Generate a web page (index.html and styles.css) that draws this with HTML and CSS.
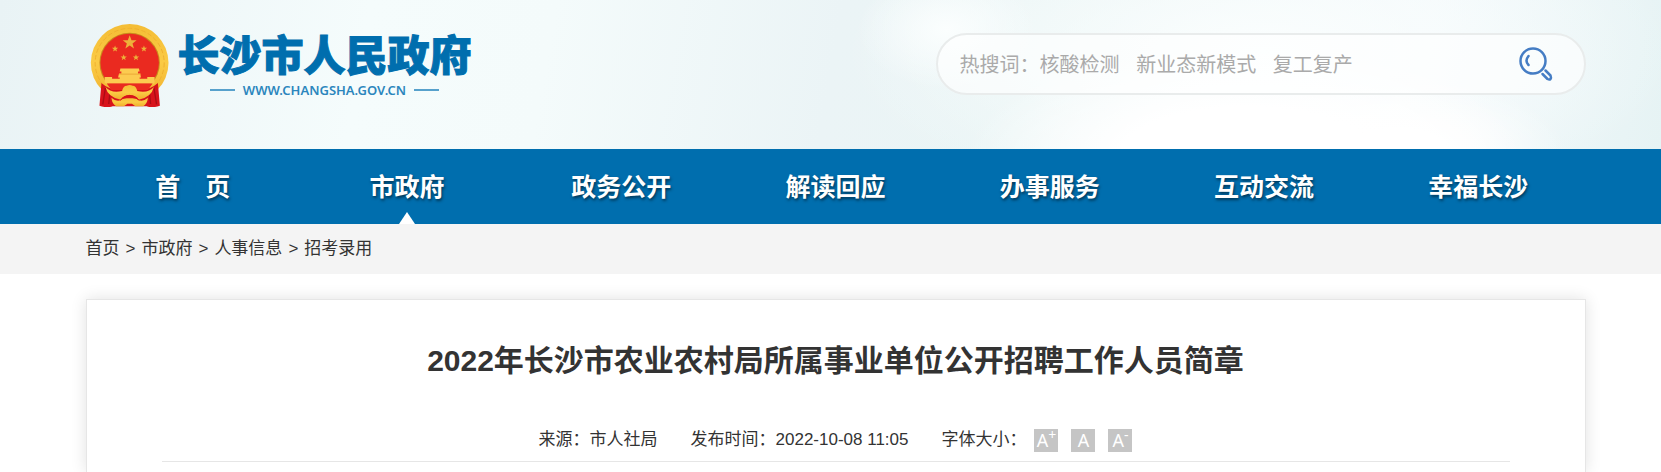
FILE: index.html
```html
<!DOCTYPE html>
<html lang="zh-CN">
<head>
  <meta charset="UTF-8">
  <meta name="viewport" content="width=device-width, initial-scale=1.0">
  <title>2022年长沙市农业农村局所属事业单位公开招聘工作人员简章</title>
  <link rel="stylesheet" href="styles.css">
</head>
<body>

  <!-- Header -->
  <header class="header">
    <div class="container header-inner">
      <a class="logo" href="#">
        <svg class="emblem" viewBox="0 0 240 250" aria-hidden="true">
          <defs>
            <linearGradient id="gold" x1="0" y1="0" x2="0" y2="1">
              <stop offset="0" stop-color="#f4bd35"/>
              <stop offset="0.5" stop-color="#fbcb45"/>
              <stop offset="1" stop-color="#efae2b"/>
            </linearGradient>
            <polygon id="star" points="0,-10 2.5,-3.2 9.5,-3.1 3.9,1.2 5.9,8.1 0,4 -5.9,8.1 -3.9,1.2 -9.5,-3.1 -2.5,-3.2"/>
          </defs>
          <circle cx="119" cy="117" r="117" fill="url(#gold)"/>
          <circle cx="119" cy="117" r="104" fill="none" stroke="#efb02f" stroke-width="3" stroke-dasharray="14 7"/>
          <circle cx="119" cy="117" r="91" fill="#c98a1c"/>
          <circle cx="119" cy="117" r="88" fill="#ea2a20"/>
          <g fill="#edb23a">
            <use href="#star" transform="translate(119 56) scale(2.2)"/>
            <use href="#star" transform="translate(75 75)"/>
            <use href="#star" transform="translate(162 75)"/>
            <use href="#star" transform="translate(101 101)"/>
            <use href="#star" transform="translate(138 101)"/>
          </g>
          <path fill="#fccb50" d="M91 134h56l2 9h-5v6h7l2 12h-4v4h38l7 15H46l7-15h36v-4h-5l3-12h7v-6h-5z"/>
          <path fill="#fccb50" d="M44 160h22v6h106v-6h22v18H44z"/>
          <path d="M87 151h65" stroke="#e5962a" stroke-width="2"/>
          <path fill="#d8131b" d="M34 178q22 20 50 20h70q28 0 50-20l6 68q-20 8-40 2H68q-20 6-40-2z"/>
          <path fill="#ea2a20" d="M50 179h138l-14 20H64z"/>
          <path d="M46 192l-8 50M60 201l-4 40M192 192l8 50M178 201l4 40" stroke="#a90d14" stroke-width="4"/>
          <path fill="url(#gold)" d="M46 190q18 20 50 12q4-16 14-16q9-4 18 0q10 0 14 16q32 8 50-12q-8 32-46 38q-8-14-27-14t-27 14q-38-6-46-38z"/>
          <path fill="url(#gold)" d="M64 222q18 16 34 4l12-2h18l12 2q16 12 34-4q-2 18-14 26h-24l-10-8h-14l-10 8H78q-12-8-14-26z"/>
          <path d="M90 230q29-30 58 0" fill="none" stroke="#d8131b" stroke-width="3"/>
        </svg>
        <span class="logo-text">
          <span class="logo-name">长沙市人民政府</span>
          <span class="logo-url">WWW.CHANGSHA.GOV.CN</span>
        </span>
      </a>

      <form class="search">
        <input class="search-input" type="text" aria-label="搜索" placeholder="热搜词：核酸检测&nbsp;&nbsp;&nbsp;新业态新模式&nbsp;&nbsp;&nbsp;复工复产">
        <button class="search-btn" type="button" aria-label="搜索">
          <svg viewBox="0 0 36 36" fill="none" stroke="#457dc4" stroke-width="2.500" stroke-linecap="round" stroke-linejoin="round">
            <circle cx="15" cy="15" r="12.500"/>
            <path d="M10.500 10q-4 5 0 9"/>
            <path d="M24.500 28l5 5q2 1 3 0t0-3.500l-5-5"/>
          </svg>
        </button>
      </form>
    </div>
  </header>

  <!-- Navbar -->
  <nav class="navbar">
    <div class="container nav-list">
      <a href="#">首　页</a>
      <a class="active" href="#">市政府</a>
      <a href="#">政务公开</a>
      <a href="#">解读回应</a>
      <a href="#">办事服务</a>
      <a href="#">互动交流</a>
      <a href="#">幸福长沙</a>
    </div>
  </nav>

  <!-- Breadcrumb -->
  <div class="breadcrumb">
    <div class="container breadcrumb-list">
      <a href="#">首页</a>
      <span>&gt;</span>
      <a href="#">市政府</a>
      <span>&gt;</span>
      <a href="#">人事信息</a>
      <span>&gt;</span>
      <a href="#">招考录用</a>
    </div>
  </div>

  <!-- Article -->
  <main class="main">
    <article class="container article">
      <h1>2022年长沙市农业农村局所属事业单位公开招聘工作人员简章</h1>
      <div class="meta">
        <span>来源：市人社局</span>
        <span>发布时间：2022-10-08 11:05</span>
        <div class="font-size">
          <span>字体大小：</span>
          <button type="button">A<sup>+</sup></button>
          <button type="button">A</button>
          <button type="button">A<sup>-</sup></button>
        </div>
      </div>
    </article>
  </main>

</body>
</html>
```

FILE: styles.css
```css
/* Reset & base */
* {
  margin: 0;
  padding: 0;
  box-sizing: border-box;
}

body {
  font-family: "Liberation Sans", "Noto Sans CJK SC", sans-serif;
  font-size: 17px;
  color: #333;
  background: #fff;
}

a {
  color: inherit;
  text-decoration: none;
}

.header, .navbar, .breadcrumb, .main {
  padding-left: 10px;
}

.container {
  max-width: 1500px;
  margin: 0 auto;
}

/* Header */
.header {
  background:
    radial-gradient(ellipse 90px 60px at 57% 20%, #fbfefe, transparent),
    radial-gradient(ellipse 280px 110px at 75% 105%, #fff 45%, transparent),
    radial-gradient(ellipse 170px 70px at 84% 100%, #fff 30%, transparent),
    radial-gradient(ellipse 420px 160px at 76% 35%, #fbfefe, transparent),
    linear-gradient(100deg, #e9f3f5 0%, #f5fcfc 22%, #f4fbfb 33%, #ebf4f6 50%, #eaf5f5 62%, #f3f9fb 85%, #e6f3f4 100%);
}

.header-inner {
  display: flex;
  justify-content: space-between;
  align-items: flex-start;
  padding: 24px 0 42px;
}

.logo {
  display: flex;
  color: #006eae;
  padding-left: 4px;
}

.emblem {
  width: 80px;
  height: 83px;
}

.logo-text {
  display: flex;
  flex-direction: column;
  margin-left: 8px;
  padding-top: 9px;
}

.logo-name {
  font-size: 42px;
  font-weight: 900;
  line-height: 48px;
  -webkit-text-stroke: 1px #006eae;
}

.logo-url {
  display: flex;
  align-items: center;
  justify-content: center;
  gap: 8px;
  font-family: "Noto Sans", sans-serif;
  font-size: 13px;
  font-weight: 600;
  line-height: 18px;
  color: #2b86bd;
}

.logo-url::before, .logo-url::after {
  content: "";
  width: 25px;
  height: 2px;
  background: #57a1cc;
}

/* Search */
.search {
  display: flex;
  align-items: center;
  width: 650px;
  height: 62px;
  margin-top: 9px;
  padding: 0 30px 0 22px;
  border: 2px solid #e9ecec;
  border-radius: 31px;
  background: rgba(255, 255, 255, 0.6);
}

.search-input {
  flex: 1;
  height: 40px;
  padding-top: 2px;
  border: none;
  outline: none;
  background: none;
  font-family: inherit;
  font-size: 20px;
  color: #333;
}

.search-input::placeholder {
  color: #aaa;
}

.search-btn {
  width: 36px;
  height: 36px;
  border: none;
  background: none;
  cursor: pointer;
}

.search-btn svg {
  display: block;
}

/* Navbar */
.navbar {
  background: #006eae;
}

.nav-list {
  display: flex;
}

.nav-list a {
  flex: 1;
  position: relative;
  padding-top: 1px;
  color: #fff;
  font-size: 25px;
  font-weight: bold;
  line-height: 74px;
  text-align: center;
  text-shadow: 1px 2px 3px rgba(0, 0, 0, 0.5);
}

.nav-list .active::after {
  content: "";
  position: absolute;
  bottom: 0;
  left: 50%;
  transform: translateX(-50%);
  border: 8px solid transparent;
  border-top: none;
  border-bottom: 12px solid #fff;
}

/* Breadcrumb */
.breadcrumb {
  background: #f4f4f4;
  line-height: 50px;
}

.breadcrumb-list {
  display: flex;
  gap: 6px;
}

/* Article */
.main {
  padding-top: 25px;
}

.article {
  padding: 31px 75px 10px;
  border: 1px solid #e6e6e6;
  border-bottom: none;
  box-shadow: 0 0 15px rgba(0, 0, 0, 0.12);
}

.article h1 {
  font-size: 30px;
  line-height: 60px;
  text-align: center;
}

.meta {
  display: flex;
  justify-content: center;
  align-items: center;
  gap: 33px;
  padding: 35px 0 7px;
  line-height: 28px;
  border-bottom: 1px solid #e6e6e6;
}

.font-size {
  display: flex;
  align-items: center;
  gap: 13px;
}

.font-size span {
  margin-right: -5px;
}

.font-size button {
  width: 24px;
  height: 23px;
  border: none;
  background: #c5c5c5;
  color: #fff;
  font-family: "Noto Sans", sans-serif;
  font-size: 18px;
  line-height: 23px;
  cursor: pointer;
}

.font-size sup {
  font-size: 14px;
  line-height: 0;
}
```
